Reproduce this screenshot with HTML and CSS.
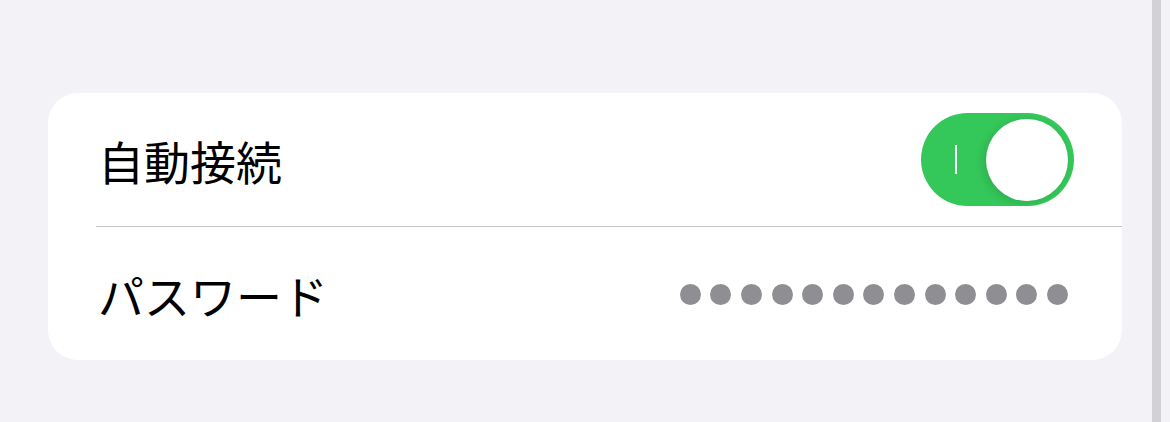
FILE: index.html
```html
<!DOCTYPE html>
<html lang="ja">
<head>
  <meta charset="UTF-8" />
  <title>Wi-Fi</title>
  <meta name="viewport" content="width=device-width, initial-scale=1" />
  <link rel="stylesheet" href="styles.css">
</head>
<body>

  <main class="page">
    <section class="card">
      <div class="row">
        <div class="row-inner with-sep">
          <span class="label">自動接続</span>
          <div class="toggle on" role="switch" aria-checked="true">
            <span class="toggle-mark"></span>
            <span class="knob"></span>
          </div>
        </div>
      </div>
      <div class="row">
        <div class="row-inner">
          <span class="label">パスワード</span>
          <div class="dots" aria-label="password">
            <i></i><i></i><i></i><i></i><i></i><i></i><i></i><i></i><i></i><i></i><i></i><i></i><i></i>
          </div>
        </div>
      </div>
    </section>
  </main>

  <div class="scrollbar"></div>

</body>
</html>
```

FILE: styles.css
```css
:root {
  --bg: #f2f2f7;
  --card: #ffffff;
  --fg: #000000;
  --sep: #c6c6c8;
  --green: #34c759;
  --dots: #8e8e93;
  --bar: #d1d1d6;
}

html, body {
  height: 100%;
}

body {
  margin: 0;
  display: flex;
  background: var(--bg);
  color: var(--fg);
  font-family: "Noto Sans CJK JP", "Noto Sans", sans-serif;
}

.page {
  flex: 1;
  padding: 93px 30px 0 48px;
}

.scrollbar {
  width: 9px;
  margin-right: 9px;
  background: var(--bar);
}

.card {
  background: var(--card);
  border-radius: 30px;
  overflow: hidden;
}

.row {
  padding-left: 48px;
}

.row-inner {
  display: flex;
  align-items: center;
  justify-content: space-between;
  height: 133px;
  padding-right: 48px;
}

.row-inner.with-sep {
  height: 133px;
  border-bottom: 1px solid var(--sep);
}

.label {
  font-size: 46px;
  line-height: 1;
  margin-left: 2px;
}

.toggle {
  width: 153px;
  height: 93px;
  box-sizing: border-box;
  border-radius: 47px;
  background: var(--green);
  display: flex;
  align-items: center;
  justify-content: space-between;
  padding: 0 6px 0 34px;
}

.toggle-mark {
  width: 2px;
  height: 29px;
  background: #fff;
}

.knob {
  width: 82px;
  height: 82px;
  border-radius: 50%;
  background: #fff;
  box-shadow: -3px 2px 8px rgba(0, 0, 0, 0.12);
}

.dots {
  display: flex;
  gap: 9.6px;
  margin-right: 6px;
  margin-top: 2px;
}

.dots i {
  width: 21px;
  height: 21px;
  border-radius: 50%;
  background: var(--dots);
}
```
